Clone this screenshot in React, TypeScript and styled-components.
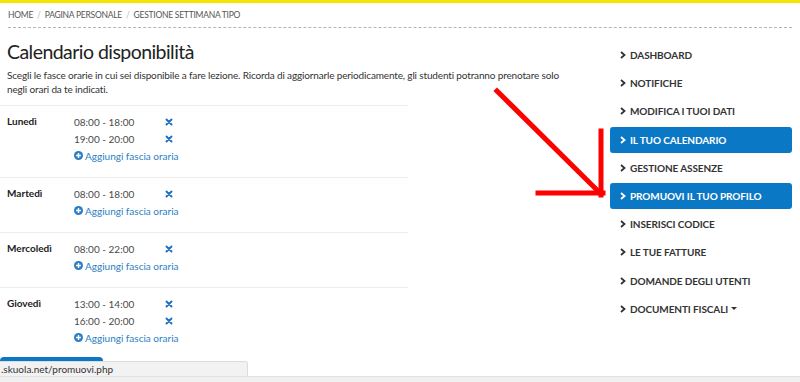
import styled, { createGlobalStyle } from "styled-components"

const GlobalStyle = createGlobalStyle`
  html, body {
    margin: 0;
    padding: 0;
    background: #fff;
    overflow: hidden;
  }
  body {
    font-family: Lato, "Open Sans", sans-serif;
    color: #333;
  }
`

interface Day {
  name: string
  slots: string[]
}

const days: Day[] = [
  { name: "Lunedì", slots: ["08:00 - 18:00", "19:00 - 20:00"] },
  { name: "Martedì", slots: ["08:00 - 18:00"] },
  { name: "Mercoledì", slots: ["08:00 - 22:00"] },
  { name: "Giovedì", slots: ["13:00 - 14:00", "16:00 - 20:00"] },
]

const menu = [
  { label: "Dashboard" },
  { label: "Notifiche" },
  { label: "Modifica i tuoi dati" },
  { label: "Il tuo calendario", active: true },
  { label: "Gestione assenze" },
  { label: "Promuovi il tuo profilo", active: true },
  { label: "Inserisci codice" },
  { label: "Le tue fatture" },
  { label: "Domande degli utenti" },
  { label: "Documenti fiscali", dropdown: true },
]

const Chevron = () => (
  <svg width="6" height="8" viewBox="0 0 6 8">
    <path d="M1 1 L4.5 4 L1 7" fill="none" stroke="currentColor" strokeWidth="1.8" />
  </svg>
)

const RemoveIcon = () => (
  <svg width="8" height="8" viewBox="0 0 8 8">
    <path d="M1.5 1.5 L6.5 6.5 M6.5 1.5 L1.5 6.5" stroke="#1b6ec2" strokeWidth="1.9" strokeLinecap="round" />
  </svg>
)

const PlusCircle = () => (
  <svg width="9" height="9" viewBox="0 0 10 10">
    <circle cx="5" cy="5" r="5" fill="#2a7fc4" />
    <path d="M5 2.3 V7.7 M2.3 5 H7.7" stroke="#fff" strokeWidth="1.6" />
  </svg>
)

export default function App() {
  return (
    <>
      <GlobalStyle />
      <TopBar />
      <Page>
        <Breadcrumb>
          <Crumb>Home</Crumb>
          <Sep>/</Sep>
          <Crumb>Pagina personale</Crumb>
          <Sep>/</Sep>
          <Crumb>Gestione settimana tipo</Crumb>
        </Breadcrumb>
        <Columns>
          <Main>
            <Title>Calendario disponibilità</Title>
            <Intro>
              Scegli le fasce orarie in cui sei disponibile a fare lezione. Ricorda di aggiornarle
              periodicamente, gli studenti potranno prenotare solo negli orari da te indicati.
            </Intro>
            <DayList>
              {days.map((d) => (
                <DayRow key={d.name}>
                  <DayName>{d.name}</DayName>
                  <Slots>
                    {d.slots.map((s) => (
                      <Slot key={s}>
                        <Time>{s}</Time>
                        <RemoveIcon />
                      </Slot>
                    ))}
                    <AddLink>
                      <PlusCircle />
                      Aggiungi fascia oraria
                    </AddLink>
                  </Slots>
                </DayRow>
              ))}
            </DayList>
            {/* label sits under the browser status bar in the screenshot */}
            <SaveButton aria-label="Salva" />
          </Main>
          <Sidebar>
            {menu.map((m) => (
              <MenuItem key={m.label} $active={m.active}>
                <Chevron />
                <span>{m.label}</span>
                {m.dropdown && <Caret />}
              </MenuItem>
            ))}
          </Sidebar>
        </Columns>
      </Page>
      <Arrow width="800" height="382" viewBox="0 0 800 382">
        <g stroke="#ff0000" strokeWidth="5" fill="none" strokeLinecap="square">
          <path d="M497 91 L599 192" />
          <path d="M601 131 L601 195" />
          <path d="M538 193 L603 193" />
        </g>
      </Arrow>
      <StatusBar>.skuola.net/promuovi.php</StatusBar>
      <BottomEdge />
    </>
  )
}

const TopBar = styled.div`
  height: 3px;
  background: #f6e400;
`
const Page = styled.div`
  padding: 0 8px 0 0;
`
const Breadcrumb = styled.div`
  display: flex;
  align-items: center;
  gap: 4px;
  height: 24px;
  margin: 0 0 0 8px;
  border-bottom: 1px dashed #b5b5b5;
  font-size: 8.5px;
  letter-spacing: -0.25px;
  text-transform: uppercase;
  color: #555;
`
const Crumb = styled.span``
const Sep = styled.span`
  color: #bbb;
`
const Columns = styled.div`
  display: flex;
  justify-content: space-between;
`
const Main = styled.div`
  width: 590px;
`
const Title = styled.h1`
  margin: 12px 0 0 7px;
  font-size: 19.5px;
  font-weight: 400;
  letter-spacing: -0.55px;
  line-height: 24px;
  color: #222;
`
const Intro = styled.p`
  margin: 4px 0 0 7px;
  font-size: 10px;
  letter-spacing: -0.15px;
  line-height: 14px;
  width: 560px;
  color: #333;
`
const DayList = styled.div`
  margin-top: 9px;
  width: 408px;
`
const DayRow = styled.div`
  display: flex;
  border-top: 1px solid #ececec;
  padding: 7px 0 13px 7px;
`
const DayName = styled.div`
  width: 67px;
  font-size: 10px;
  font-weight: 700;
  line-height: 17px;
  color: #222;
`
const Slots = styled.div`
  display: flex;
  flex-direction: column;
`
const Slot = styled.div`
  display: flex;
  align-items: center;
  height: 17px;
`
const Time = styled.span`
  width: 91px;
  font-size: 10px;
  color: #4a4a4a;
`
const AddLink = styled.a`
  display: flex;
  align-items: center;
  gap: 2px;
  height: 17px;
  font-size: 10px;
  color: #2a7fc4;
  cursor: pointer;
`
const SaveButton = styled.button`
  display: block;
  width: 103px;
  height: 26px;
  margin-top: -2px;
  border: none;
  border-radius: 4px;
  background: #0b78c5;
`
const Sidebar = styled.nav`
  width: 182px;
  margin-top: 14px;
  display: flex;
  flex-direction: column;
  gap: 2.2px;
`
const MenuItem = styled.div<{ $active?: boolean }>`
  display: flex;
  align-items: center;
  gap: 4px;
  height: 26px;
  padding-left: 10px;
  border-radius: 3px;
  background: ${(p) => (p.$active ? "#0b78c5" : "transparent")};
  color: ${(p) => (p.$active ? "#fff" : "#333")};
  font-size: 10px;
  font-weight: 700;
  letter-spacing: -0.1px;
  text-transform: uppercase;
`
const Caret = styled.span`
  width: 0;
  height: 0;
  margin-left: -1px;
  border-left: 3px solid transparent;
  border-right: 3px solid transparent;
  border-top: 3px solid #333;
`
const Arrow = styled.svg`
  position: absolute;
  top: 0;
  left: 0;
  pointer-events: none;
`
const StatusBar = styled.div`
  position: fixed;
  left: 0;
  bottom: 5px;
  width: 246px;
  height: 14px;
  padding-left: 1px;
  background: #f2f2f2;
  border: 1px solid #dcdcdc;
  border-left: none;
  border-radius: 0 3px 0 0;
  font-size: 10px;
  line-height: 14px;
  color: #333;
`
const BottomEdge = styled.div`
  position: fixed;
  left: 0;
  right: 0;
  bottom: 0;
  height: 5px;
  background: #f0f0f0;
  border-top: 1px solid #e2e2e2;
`
